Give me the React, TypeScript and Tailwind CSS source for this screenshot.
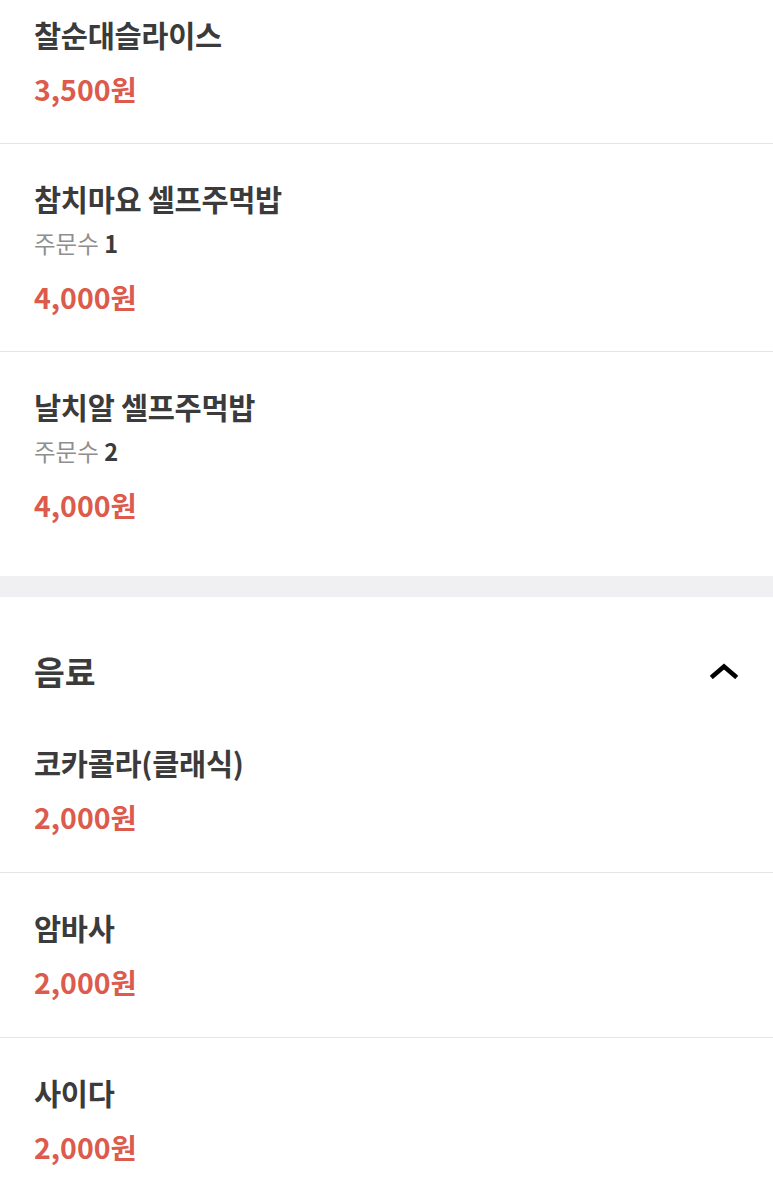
const font = { fontFamily: '"Noto Sans CJK KR", "Noto Sans", sans-serif' }

type Item = { name: string; price: string; orders?: number }

const mainItems: Item[] = [
  { name: '찰순대슬라이스', price: '3,500원' },
  { name: '참치마요 셀프주먹밥', price: '4,000원', orders: 1 },
  { name: '날치알 셀프주먹밥', price: '4,000원', orders: 2 },
]

const drinks: Item[] = [
  { name: '코카콜라(클래식)', price: '2,000원' },
  { name: '암바사', price: '2,000원' },
  { name: '사이다', price: '2,000원' },
]

const MenuRow = ({
  item,
  first,
  last,
  roomy,
}: {
  item: Item
  first?: boolean
  last?: boolean
  roomy?: boolean
}) => (
  <div
    className={`px-[34px] ${first ? 'pt-[16px]' : 'pt-[36px]'} ${
      last ? 'pb-[53px]' : `${roomy ? 'pb-[37px]' : 'pb-[36px]'} border-b border-[#e6e6e6]`
    }`}
  >
    <div className="text-[29.5px] leading-[36px] font-semibold text-[#3b3b3b] tracking-[-0.3px]">
      {item.name}
    </div>
    {item.orders !== undefined && (
      <div className="mt-[12px] text-[23.5px] leading-[30px] text-[#8e8e8e]">
        주문수 <span className="font-bold text-[#3b3b3b]">{item.orders}</span>
      </div>
    )}
    <div
      className={`${item.orders !== undefined ? 'mt-[21px]' : 'mt-[19px]'} text-[28.5px] leading-[36px] font-bold text-[#dc5b4c]`}
    >
      {item.price}
    </div>
  </div>
)

export default function App() {
  return (
    <div className="min-h-screen bg-white overflow-hidden" style={font}>
      <section>
        {mainItems.map((it, i) => (
          <MenuRow key={it.name} item={it} first={i === 0} last={i === mainItems.length - 1} />
        ))}
      </section>

      <div className="h-[21px] bg-[#f0f0f2]" />

      <section>
        <div className="flex items-center justify-between px-[34px] pt-[54px]">
          <h2 className="text-[33.5px] leading-[40px] font-bold text-[#3b3b3b]">음료</h2>
          <svg width="28" height="16" viewBox="0 0 28 16" className="mr-[1px]">
            <path d="M3 13 L14 3.5 L25 13" fill="none" stroke="#000" strokeWidth="4.5" strokeLinecap="square" />
          </svg>
        </div>
        <div className="mt-[17px]">
          {drinks.map((it, i) => (
            <MenuRow key={it.name} item={it} roomy last={i === drinks.length - 1} />
          ))}
        </div>
      </section>
    </div>
  )
}
